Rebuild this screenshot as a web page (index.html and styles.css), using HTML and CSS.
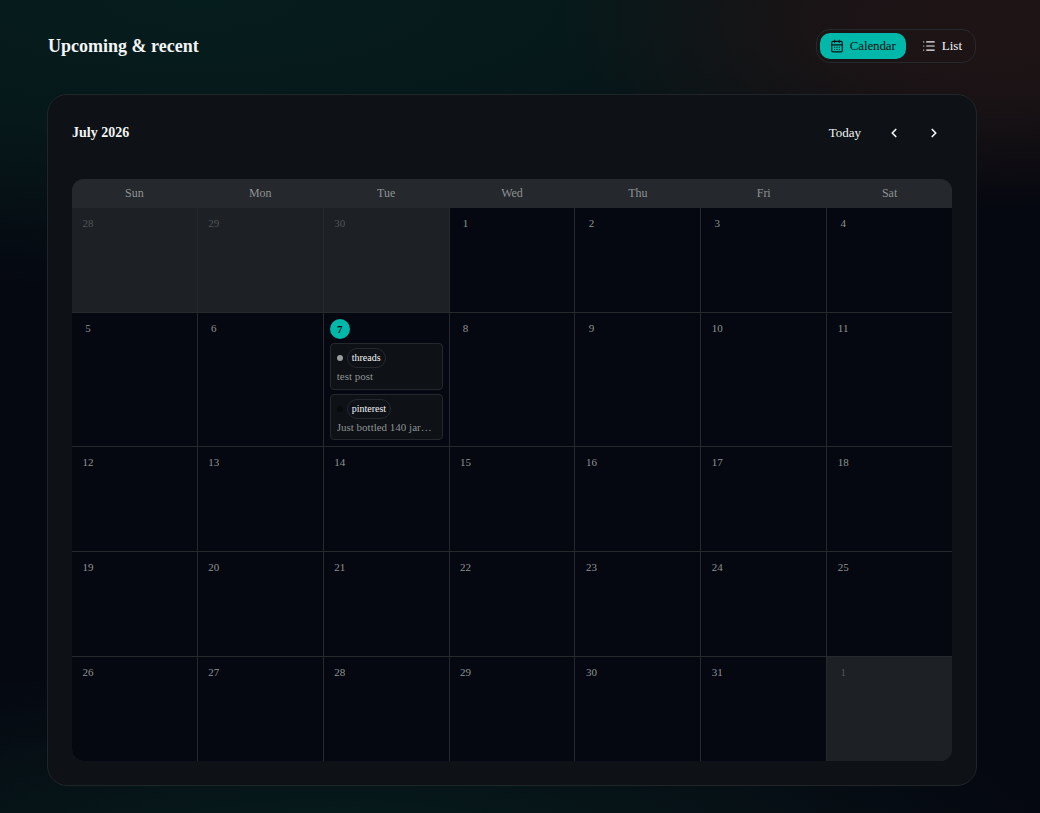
FILE: index.html
```html
<!DOCTYPE html>
<html lang="en">
<head>
    <meta charset="UTF-8">
    <meta name="viewport" content="width=device-width, initial-scale=1.0">
    <title>Upcoming &amp; recent</title>
    <link rel="stylesheet" href="styles.css">
</head>
<body>
    <main class="page">
        <header class="page-header">
            <h1>Upcoming &amp; recent</h1>
            <div class="view-toggle">
                <button class="view-btn active">
                    <svg width="14" height="14" viewBox="0 0 24 24" fill="none" stroke="currentColor" stroke-width="2" stroke-linecap="round" stroke-linejoin="round"><path d="M8 2v4M16 2v4"/><rect x="3" y="4" width="18" height="18" rx="2"/><path d="M3 10h18M8 14h.01M12 14h.01M16 14h.01M8 18h.01M12 18h.01M16 18h.01"/></svg>
                    Calendar
                </button>
                <button class="view-btn">
                    <svg width="14" height="14" viewBox="0 0 24 24" fill="none" stroke="currentColor" stroke-width="2" stroke-linecap="round" stroke-linejoin="round"><path d="M3 5h.01M3 12h.01M3 19h.01M8 5h13M8 12h13M8 19h13"/></svg>
                    List
                </button>
            </div>
        </header>

        <section class="card">
            <div class="card-header">
                <h2>July 2026</h2>
                <div class="month-nav">
                    <button class="today-btn">Today</button>
                    <button class="arrow-btn" aria-label="Previous month">
                        <svg width="14" height="14" viewBox="0 0 24 24" fill="none" stroke="currentColor" stroke-width="3" stroke-linecap="round" stroke-linejoin="round"><path d="m15 18-6-6 6-6"/></svg>
                    </button>
                    <button class="arrow-btn" aria-label="Next month">
                        <svg width="14" height="14" viewBox="0 0 24 24" fill="none" stroke="currentColor" stroke-width="3" stroke-linecap="round" stroke-linejoin="round"><path d="m9 18 6-6-6-6"/></svg>
                    </button>
                </div>
            </div>

            <div class="calendar">
                <div class="weekday">Sun</div>
                <div class="weekday">Mon</div>
                <div class="weekday">Tue</div>
                <div class="weekday">Wed</div>
                <div class="weekday">Thu</div>
                <div class="weekday">Fri</div>
                <div class="weekday">Sat</div>

                <div class="day outside"><span class="num">28</span></div>
                <div class="day outside"><span class="num">29</span></div>
                <div class="day outside"><span class="num">30</span></div>
                <div class="day"><span class="num">1</span></div>
                <div class="day"><span class="num">2</span></div>
                <div class="day"><span class="num">3</span></div>
                <div class="day"><span class="num">4</span></div>

                <div class="day"><span class="num">5</span></div>
                <div class="day"><span class="num">6</span></div>
                <div class="day today">
                    <span class="num">7</span>
                    <div class="event">
                        <div class="event-top"><span class="dot published"></span><span class="tag">threads</span></div>
                        <p>test post</p>
                    </div>
                    <div class="event">
                        <div class="event-top"><span class="dot"></span><span class="tag">pinterest</span></div>
                        <p>Just bottled 140 jar…</p>
                    </div>
                </div>
                <div class="day"><span class="num">8</span></div>
                <div class="day"><span class="num">9</span></div>
                <div class="day"><span class="num">10</span></div>
                <div class="day"><span class="num">11</span></div>

                <div class="day"><span class="num">12</span></div>
                <div class="day"><span class="num">13</span></div>
                <div class="day"><span class="num">14</span></div>
                <div class="day"><span class="num">15</span></div>
                <div class="day"><span class="num">16</span></div>
                <div class="day"><span class="num">17</span></div>
                <div class="day"><span class="num">18</span></div>

                <div class="day"><span class="num">19</span></div>
                <div class="day"><span class="num">20</span></div>
                <div class="day"><span class="num">21</span></div>
                <div class="day"><span class="num">22</span></div>
                <div class="day"><span class="num">23</span></div>
                <div class="day"><span class="num">24</span></div>
                <div class="day"><span class="num">25</span></div>

                <div class="day"><span class="num">26</span></div>
                <div class="day"><span class="num">27</span></div>
                <div class="day"><span class="num">28</span></div>
                <div class="day"><span class="num">29</span></div>
                <div class="day"><span class="num">30</span></div>
                <div class="day"><span class="num">31</span></div>
                <div class="day outside"><span class="num">1</span></div>
            </div>
        </section>
    </main>
</body>
</html>
```
FILE: styles.css
```css
* {
    box-sizing: border-box;
}

body {
    margin: 0;
    min-height: 813px;
    font-family: "Liberation Serif", "Times New Roman", serif;
    color: #f2f4f5;
    background-color: #050810;
    background-image:
        radial-gradient(ellipse 440px 190px at 1000px 20px, #1f1415, rgba(30, 20, 21, 0.85) 40%, rgba(30, 20, 21, 0) 100%),
        radial-gradient(ellipse 980px 290px at 200px 0, #061d1d, rgba(6, 28, 28, 0.8) 45%, rgba(6, 28, 28, 0) 100%),
        radial-gradient(ellipse 720px 190px at 330px 850px, #061d1d, rgba(6, 28, 28, 0) 100%);
}

h1, h2, p {
    margin: 0;
}

button {
    border: 0;
    background: none;
    color: inherit;
    font: inherit;
    cursor: pointer;
}

.page {
    padding: 29px 63px 27px 47px;
}

.page-header {
    display: flex;
    align-items: center;
    justify-content: space-between;
    height: 34px;
    margin-bottom: 31px;
    padding-left: 1px;
}

.page-header h1 {
    font-size: 18px;
    line-height: 24px;
}

.view-toggle {
    display: flex;
    height: 34px;
    margin-right: 1px;
    padding: 3px;
    border: 1px solid #25292d;
    border-radius: 14px;
}

.view-btn {
    display: flex;
    align-items: center;
    gap: 6px;
    padding: 0 10px;
    border-radius: 10px;
    font-size: 13px;
}

.view-btn.active {
    margin-right: 6px;
    background-color: #00b8a9;
    color: #071014;
    letter-spacing: -0.1px;
}

/* Calendar card */
.card {
    height: 692px;
    padding: 24px;
    border: 1px solid #202529;
    border-radius: 20px;
    background-color: #0e1115;
}

.card-header {
    display: flex;
    align-items: center;
    justify-content: space-between;
    height: 28px;
    margin-bottom: 32px;
}

.card-header h2 {
    font-size: 14px;
    line-height: 20px;
}

.month-nav {
    display: flex;
    align-items: center;
    gap: 8px;
    font-size: 13px;
}

.today-btn {
    padding: 0 9px;
}

.arrow-btn {
    display: flex;
    align-items: center;
    justify-content: center;
    width: 32px;
    height: 28px;
    padding: 0;
}

.arrow-btn:last-child {
    margin-right: 2px;
}

.calendar {
    display: grid;
    grid-template-columns: repeat(7, minmax(0, 1fr));
    grid-template-rows: 28px 104px 133px 104px 104px 104px;
    gap: 1px;
    overflow: hidden;
    border-radius: 12px;
    background-color: #26292d;
}

.weekday {
    background-color: #25282c;
    color: #8e9394;
    font-size: 12px;
    line-height: 28px;
    text-align: center;
}

.day {
    padding: 6px;
    background-color: #050810;
    color: #8e9394;
}

.day.outside {
    background-color: #1d2024;
    color: #505456;
}

.num {
    display: block;
    width: 20px;
    height: 20px;
    border-radius: 50%;
    font-size: 11px;
    line-height: 18px;
    text-align: center;
}

.today .num {
    background-color: #00b8a9;
    color: #071014;
    font-weight: bold;
    line-height: 20px;
}

.event {
    height: 47px;
    margin-top: 4px;
    padding: 4px 6px;
    border: 1px solid #25292d;
    border-radius: 4px;
    background-color: #0e1115;
    font-size: 11px;
}

.event + .event {
    height: 46px;
}

.event-top {
    display: flex;
    align-items: center;
    gap: 4px;
}

.dot {
    width: 6px;
    height: 6px;
    border-radius: 50%;
    background-color: #080a0d;
}

.dot.published {
    background-color: #9a9d9f;
}

.tag {
    height: 20px;
    padding: 0 4px;
    border: 1px solid #25292d;
    border-radius: 10px;
    color: #f2f4f5;
    font-size: 10px;
    line-height: 18px;
}

.event p {
    overflow: hidden;
    line-height: 17px;
    white-space: nowrap;
    text-overflow: ellipsis;
}
```
